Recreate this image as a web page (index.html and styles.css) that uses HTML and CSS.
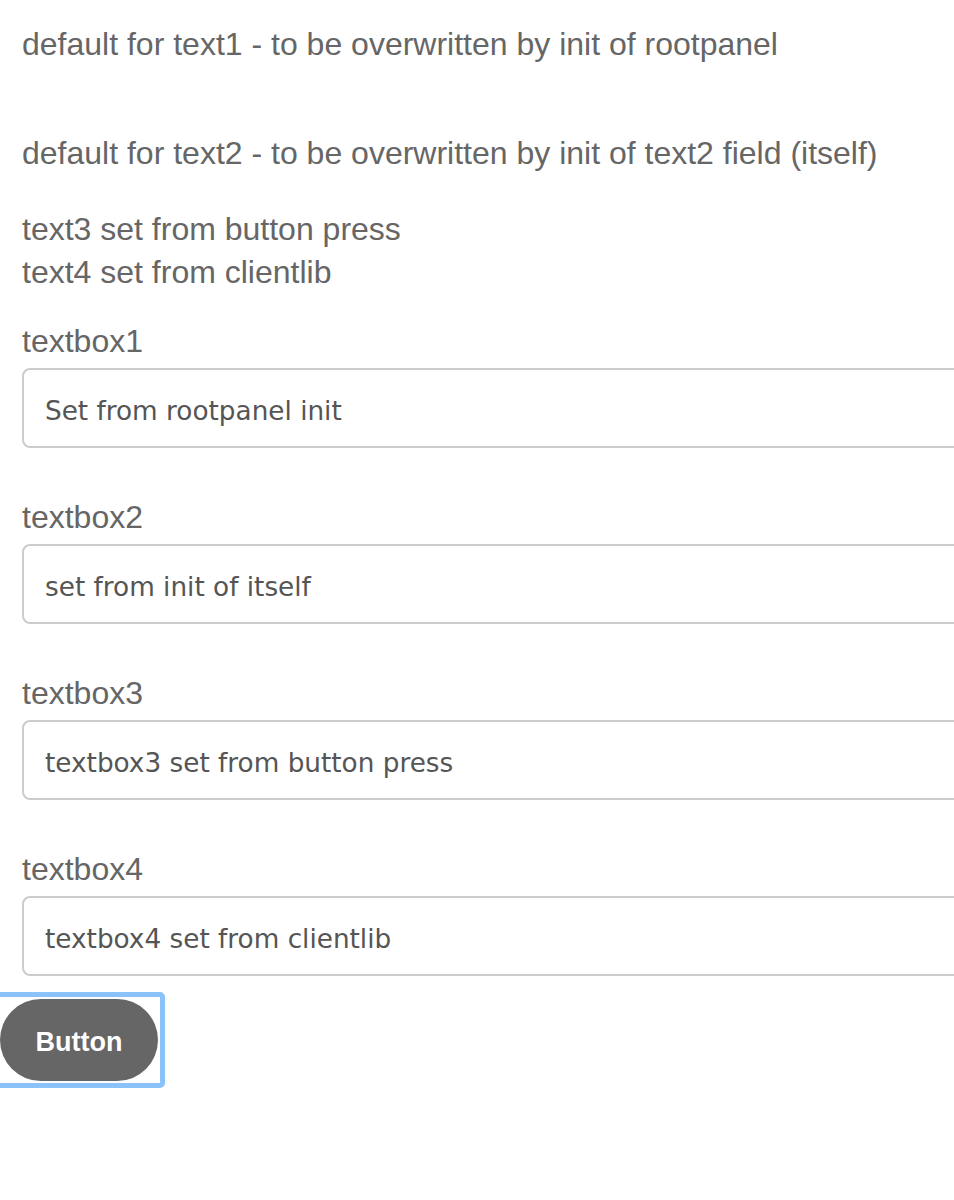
FILE: index.html
```html
<!DOCTYPE html>
<html>
<head>
<meta charset="utf-8">
<link rel="stylesheet" href="styles.css">
</head>
<body>
<div class="page">
  <div class="text t1">default for text1 - to be overwritten by init of rootpanel</div>
  <div class="text t2">default for text2 - to be overwritten by init of text2 field (itself)</div>
  <div class="text t3">text3 set from button press</div>
  <div class="text t4">text4 set from clientlib</div>

  <div class="field first">
    <label class="label">textbox1</label>
    <input class="input" type="text" value="Set from rootpanel init">
  </div>
  <div class="field">
    <label class="label">textbox2</label>
    <input class="input" type="text" value="set from init of itself">
  </div>
  <div class="field">
    <label class="label">textbox3</label>
    <input class="input" type="text" value="textbox3 set from button press">
  </div>
  <div class="field">
    <label class="label">textbox4</label>
    <input class="input" type="text" value="textbox4 set from clientlib">
  </div>

  <div class="btn-ring">
    <button class="btn" type="button">Button</button>
  </div>
</div>
</body>
</html>
```
FILE: styles.css
```css
html, body {
  margin: 0;
  padding: 0;
  background: #ffffff;
  overflow: hidden;
}
.page {
  padding: 23px 0 0 22px;
  font-family: "Liberation Sans", Arial, sans-serif;
  color: #666666;
}
.text {
  font-size: 32px;
  line-height: 43px;
  white-space: nowrap;
}
.t2 { margin-top: 66px; }
.t3 { margin-top: 33px; }
.field {
  display: flex;
  flex-direction: column;
  margin-top: 48px;
}
.field.first { margin-top: 26px; }
.label {
  font-size: 32px;
  line-height: 43px;
  margin-bottom: 5px;
}
.input {
  box-sizing: border-box;
  width: 1000px;
  height: 80px;
  border: 2px solid #cccccc;
  border-radius: 8px;
  padding: 5px 21px 0 21px;
  font-family: "DejaVu Sans", sans-serif;
  font-size: 26.3px;
  color: #555555;
  background: #ffffff;
  outline: none;
}
.btn-ring {
  display: inline-block;
  margin: 16px 0 0 -29px;
  padding: 2px;
  border: 5px solid #8cc2fa;
  border-radius: 5px;
  background: #ffffff;
}
.btn {
  display: block;
  width: 158px;
  height: 82px;
  border: none;
  border-radius: 41px;
  background: #666666;
  color: #ffffff;
  font-family: "Liberation Sans", Arial, sans-serif;
  font-weight: bold;
  font-size: 27px;
  padding: 5px 0 0 0;
}
```
